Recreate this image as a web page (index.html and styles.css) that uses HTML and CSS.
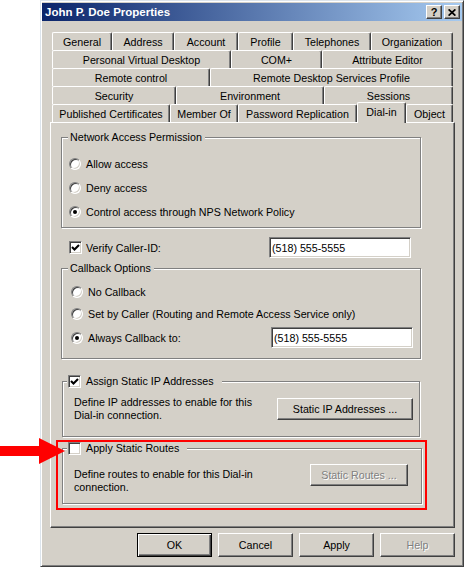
FILE: index.html
```html
<!DOCTYPE html>
<html lang="en">
<head>
<meta charset="utf-8">
<title>John P. Doe Properties</title>
<link rel="stylesheet" href="styles.css">
</head>
<body>
<div class="page">
  <div class="window">
    <div class="titlebar">
      <span class="title">John P. Doe Properties</span>
      <div class="title-buttons">
        <span class="tbtn">?</span>
        <span class="tbtn"><svg width="8" height="7" viewBox="0 0 8 7"><path d="M0.6 0.4 L7.4 6.6 M7.4 0.4 L0.6 6.6" stroke="#000" stroke-width="1.8" fill="none"/></svg></span>
      </div>
    </div>
    <div class="content">
      <div class="tabs">
        <div class="tab-row r1">
          <div class="tab">General</div>
          <div class="tab">Address</div>
          <div class="tab">Account</div>
          <div class="tab">Profile</div>
          <div class="tab">Telephones</div>
          <div class="tab">Organization</div>
        </div>
        <div class="tab-row r2">
          <div class="tab">Personal Virtual Desktop</div>
          <div class="tab">COM+</div>
          <div class="tab">Attribute Editor</div>
        </div>
        <div class="tab-row r3">
          <div class="tab">Remote control</div>
          <div class="tab">Remote Desktop Services Profile</div>
        </div>
        <div class="tab-row r4">
          <div class="tab">Security</div>
          <div class="tab">Environment</div>
          <div class="tab">Sessions</div>
        </div>
        <div class="tab-row r5">
          <div class="tab">Published Certificates</div>
          <div class="tab">Member Of</div>
          <div class="tab">Password Replication</div>
          <div class="tab active">Dial-in</div>
          <div class="tab">Object</div>
        </div>
      </div>

      <div class="panel">
        <div class="group g-nap">
          <div class="group-label">Network Access Permission</div>
          <div class="options nap-options">
            <div class="radio-row"><span class="radio"></span><span>Allow access</span></div>
            <div class="radio-row"><span class="radio"></span><span>Deny access</span></div>
            <div class="radio-row"><span class="radio on"></span><span>Control access through NPS Network Policy</span></div>
          </div>
        </div>

        <div class="verify">
          <div class="field-label">
            <span class="checkbox"><svg width="13" height="13" viewBox="0 0 13 13"><polyline points="3,6 5.5,8.5 10,4" fill="none" stroke="#000" stroke-width="2.1"/></svg></span>
            <span>Verify Caller-ID:</span>
          </div>
          <input class="textbox" type="text" value="(518) 555-5555">
        </div>

        <div class="group g-callback">
          <div class="group-label">Callback Options</div>
          <div class="options cb-options">
            <div class="radio-row cb1"><span class="radio"></span><span>No Callback</span></div>
            <div class="radio-row cb2"><span class="radio"></span><span>Set by Caller (Routing and Remote Access Service only)</span></div>
            <div class="radio-row cb3">
              <div class="field-label wide"><span class="radio on"></span><span>Always Callback to:</span></div>
              <input class="textbox" type="text" value="(518) 555-5555">
            </div>
          </div>
        </div>

        <div class="group g-ip">
          <div class="group-label check-legend">
            <span class="checkbox"><svg width="13" height="13" viewBox="0 0 13 13"><polyline points="3,6 5.5,8.5 10,4" fill="none" stroke="#000" stroke-width="2.1"/></svg></span>
            <span>Assign Static IP Addresses</span>
          </div>
          <div class="group-body ip-body">
            <p class="desc">Define IP addresses to enable for this<br>Dial-in connection.</p>
            <button class="btn ip-btn" type="button">Static IP Addresses ...</button>
          </div>
        </div>

        <div class="highlight">
          <div class="group g-routes">
            <div class="group-label check-legend">
              <span class="checkbox"></span>
              <span>Apply Static Routes</span>
            </div>
            <div class="group-body routes-body">
              <p class="desc">Define routes to enable for this Dial-in<br>connection.</p>
              <button class="btn routes-btn" type="button" disabled>Static Routes ...</button>
            </div>
          </div>
        </div>
      </div>

      <div class="dialog-buttons">
        <button class="btn default" type="button">OK</button>
        <button class="btn" type="button">Cancel</button>
        <button class="btn" type="button">Apply</button>
        <button class="btn" type="button" disabled>Help</button>
      </div>
    </div>
  </div>

  <svg class="arrow" width="66" height="30" viewBox="0 0 66 30">
    <polygon points="0,9 39,9 39,1 65,14 39,27 39,19 0,19" fill="#ff0000"/>
  </svg>
</div>
</body>
</html>
```

FILE: styles.css
```css
* {
  box-sizing: border-box;
}

html,
body {
  margin: 0;
  padding: 0;
}

body {
  background: #ffffff;
  font-family: "Liberation Sans", Arial, sans-serif;
  font-size: 10.7px;
  color: #000000;
}

.page {
  position: relative;
  width: 464px;
  height: 567px;
  overflow: hidden;
}

/* ---------- window frame ---------- */
.window {
  margin-left: 40px;
  width: 424px;
  height: 567px;
  background: #d4d0c8;
  border: 1px solid;
  border-color: #dce4ec #404040 #404040 #dce4ec;
  box-shadow: inset 1px 1px 0 #ffffff, inset -1px -1px 0 #808080;
  padding: 2px 1px 2px 1px;
}

.titlebar {
  height: 18px;
  display: flex;
  align-items: center;
  justify-content: space-between;
  padding: 0 2px 0 3px;
  background: linear-gradient(to right, #0a246a, #a6caf0);
}

.title {
  color: #ffffff;
  font-weight: bold;
  font-size: 11.5px;
  line-height: 14px;
}

.title-buttons {
  display: flex;
  gap: 2px;
}

.tbtn {
  width: 16px;
  height: 14px;
  display: flex;
  align-items: center;
  justify-content: center;
  background: #d4d0c8;
  border: 1px solid;
  border-color: #ffffff #404040 #404040 #ffffff;
  box-shadow: inset -1px -1px 0 #808080;
  font-weight: bold;
  font-size: 11px;
  line-height: 12px;
}

.content {
  padding: 11px 0 0 8px;
}

/* ---------- tabs ---------- */
.tabs {
  margin-left: 2px;
  width: 401px;
}

.tab-row {
  display: grid;
  grid-template-rows: 18px;
  height: 18px;
}

.r1 { grid-template-columns: 60px 62px 64px 55px 78px 82px; }
.r2 { grid-template-columns: 179px 91px 131px; }
.r3 { grid-template-columns: 158px 243px; }
.r4 { grid-template-columns: 124px 148px 129px; }
.r5 { grid-template-columns: 118px 68px 119px 49px 47px; }

.tab {
  height: 18px;
  display: flex;
  align-items: center;
  justify-content: center;
  white-space: nowrap;
  background: #d4d0c8;
  border-top: 1px solid #ffffff;
  border-left: 1px solid #ffffff;
  border-right: 1px solid #404040;
  border-top-left-radius: 2px;
  border-top-right-radius: 2px;
  box-shadow: inset -1px 0 0 #808080;
}

.tab.active {
  align-self: start;
  height: 21px;
  margin-top: -2px;
  margin-bottom: -1px;
  padding-bottom: 2px;
  position: relative;
  z-index: 1;
}

/* ---------- panel ---------- */
.panel {
  width: 405px;
  height: 406px;
  border: 1px solid;
  border-color: #ffffff #404040 #404040 #ffffff;
  box-shadow: inset -1px -1px 0 #808080;
}

.group {
  border: 1px solid #808080;
  box-shadow: 1px 1px 0 #ffffff, inset 1px 1px 0 #ffffff;
}

.group-label {
  display: block;
  width: fit-content;
  height: 13px;
  line-height: 13px;
  margin: -7px 0 0 6px;
  padding: 0 3px 0 2px;
  background: #d4d0c8;
  white-space: nowrap;
}

.check-legend {
  display: flex;
  align-items: center;
  gap: 5px;
  margin-left: 4px;
  padding: 0 8px 0 1px;
}

.g-nap {
  margin: 14px 0 0 10px;
  width: 360px;
  height: 91px;
}

.nap-options {
  padding: 8px 0 0 7px;
}

.radio-row {
  display: flex;
  align-items: center;
  gap: 5px;
  height: 24px;
  white-space: nowrap;
}

.radio {
  flex: none;
  width: 12px;
  height: 12px;
  border-radius: 50%;
  background: #ffffff;
  border: 1px solid;
  border-color: #808080 #ffffff #ffffff #808080;
  box-shadow: inset 1px 1px 0 #404040, inset -1px -1px 0 #d4d0c8;
  display: flex;
  align-items: center;
  justify-content: center;
}

.radio.on::after {
  content: "";
  width: 4px;
  height: 4px;
  border-radius: 50%;
  background: #000000;
}

.checkbox {
  flex: none;
  width: 13px;
  height: 13px;
  background: #ffffff;
  border: 1px solid;
  border-color: #808080 #ffffff #ffffff #808080;
  box-shadow: inset 1px 1px 0 #404040, inset -1px -1px 0 #d4d0c8;
  display: block;
  position: relative;
}

.checkbox svg {
  display: block;
  margin: -1px 0 0 -1px;
}

.verify {
  display: flex;
  align-items: center;
  height: 21px;
  margin: 9px 0 0 18px;
}

.field-label {
  flex: none;
  width: 200px;
  display: flex;
  align-items: center;
  gap: 4px;
  white-space: nowrap;
}

.field-label.wide {
  gap: 5px;
}

.textbox {
  width: 142px;
  height: 21px;
  margin: 0;
  padding: 0 0 0 2px;
  font: inherit;
  color: #000000;
  background: #ffffff;
  border: 1px solid;
  border-color: #808080 #ffffff #ffffff #808080;
  box-shadow: inset 1px 1px 0 #404040, inset -1px -1px 0 #d4d0c8;
  outline: none;
}

.g-callback {
  margin: 10px 0 0 10px;
  width: 360px;
  height: 91px;
}

.cb-options {
  padding: 6px 0 0 9px;
}

.cb1 { height: 22px; }
.cb2 { height: 21px; }
.cb3 {
  height: 21px;
  margin-top: 3px;
  gap: 0;
}

.g-ip {
  margin: 22px 0 0 11px;
  width: 358px;
  height: 56px;
}

.group-body {
  display: flex;
  justify-content: space-between;
}

.ip-body {
  align-items: center;
  padding: 8px 6px 0 11px;
}

.desc {
  margin: 0;
  line-height: 13px;
  white-space: nowrap;
}

.highlight {
  margin: 3px 0 0 5px;
  width: 371px;
  border: 2px solid #ff0000;
  padding: 0 0 4px 4px;
}

.g-routes {
  margin-top: 6px;
  width: 360px;
  height: 56px;
}

.routes-body {
  align-items: flex-start;
  padding: 9px 13px 0 11px;
}

.routes-body .desc {
  margin-top: 4px;
}

/* ---------- buttons ---------- */
.btn {
  margin: 0;
  padding: 0;
  font: inherit;
  color: #000000;
  background: #d4d0c8;
  border: 1px solid;
  border-color: #ffffff #404040 #404040 #ffffff;
  box-shadow: inset -1px -1px 0 #808080;
  white-space: nowrap;
}

.btn:disabled {
  color: #808080;
  text-shadow: 1px 1px 0 #ffffff;
}

.btn.default {
  border-color: #000000;
  box-shadow: inset 1px 1px 0 #ffffff, inset -1px -1px 0 #404040, inset -2px -2px 0 #808080;
}

.ip-btn {
  width: 136px;
  height: 22px;
}

.routes-btn {
  width: 98px;
  height: 22px;
}

.dialog-buttons {
  width: 405px;
  margin-top: 5px;
  display: flex;
  justify-content: flex-end;
  gap: 6px;
}

.dialog-buttons .btn {
  width: 75px;
  height: 24px;
}

/* ---------- annotation ---------- */
.arrow {
  position: absolute;
  left: 0;
  top: 437px;
}
```
